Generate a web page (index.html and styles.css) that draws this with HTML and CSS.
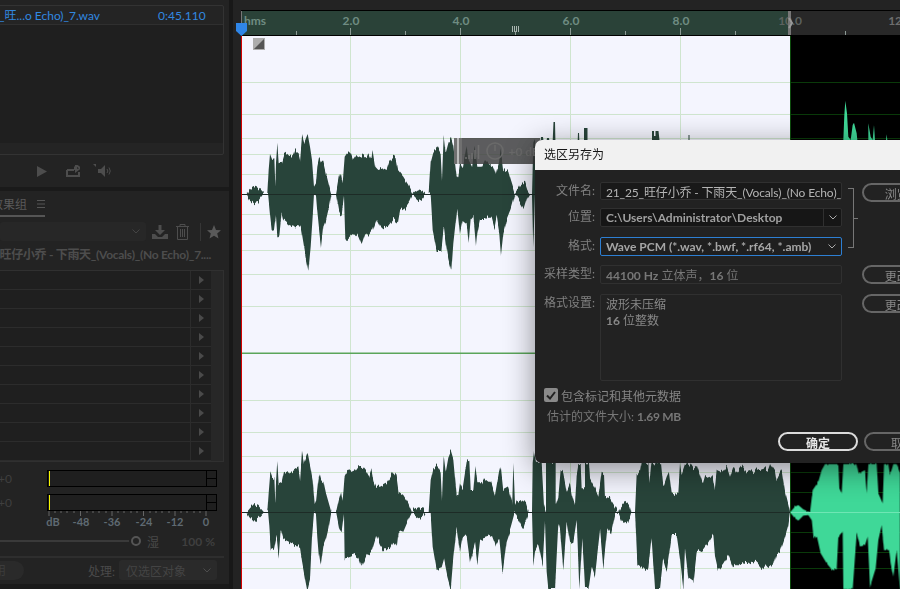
FILE: index.html
```html
<!DOCTYPE html>
<html lang="zh-CN">
<head>
    <meta charset="UTF-8">
    <title>选区另存为</title>
    <link rel="stylesheet" href="styles.css">
</head>
<body>
<div class="app">
    <div class="left-col">
        <div class="files-panel">
            <div class="file-box">
                <div class="file-row">
                    <span class="file-name">25_旺...o Echo)_7.wav</span>
                    <span class="file-time">0:45.110</span>
                </div>
                <div class="file-list"></div>
            </div>
            <div class="transport">
                <svg width="10" height="11" viewBox="0 0 10 11"><polygon points="0,0 10,5.500 0,11" fill="#4d4d4d"/></svg>
                <svg width="14" height="12" viewBox="0 0 14 12"><path d="M1 5v6h12V7M1 5h7M8 2.500h2V0l4 3-4 3V4H8" fill="none" stroke="#4d4d4d" stroke-width="2"/></svg>
                <svg width="20" height="14" viewBox="0 0 20 14"><polygon points="0,0 3,0 3,3" fill="#4d4d4d"/><polygon points="5,5 8,5 12,1 12,13 8,9 5,9" fill="#4d4d4d"/><path d="M14 5a3 3 0 0 1 0 4M16 3.500a6 6 0 0 1 0 7" fill="none" stroke="#4d4d4d"/></svg>
            </div>
        </div>
        <div class="fx-panel">
            <div class="fx-tabs">
                <span class="fx-tab">效果组</span>
                <svg width="8" height="8" viewBox="0 0 8 8"><path d="M0 .5h8M0 4h8M0 7.500h8" stroke="#555"/></svg>
            </div>
            <div class="fx-tools">
                <div class="fx-select"><svg width="8" height="5" viewBox="0 0 8 5"><path d="M.5.5 4 4 7.500.5" fill="none" stroke="#444"/></svg></div>
                <svg class="tool-save" width="16" height="14" viewBox="0 0 16 14"><path d="M6.500 0h3v5H13L8 10 3 5h3.500zM0 9h3l3 3h4l3-3h3v5H0z" fill="#4d4d4d"/></svg>
                <svg class="tool-trash" width="13" height="16" viewBox="0 0 13 16"><path d="M0 2.500h13M4 2.500V.5h5v2M1.500 2.500v13h10v-13M4.500 5v8M6.500 5v8M8.500 5v8" fill="none" stroke="#4d4d4d"/></svg>
                <span class="tool-sep"></span>
                <svg class="tool-star" width="14" height="14" viewBox="0 0 14 14"><polygon points="7,0 9,5 14,5.300 10.200,8.500 11.500,13.500 7,10.700 2.500,13.500 3.800,8.500 0,5.300 5,5" fill="#595959"/></svg>
            </div>
            <div class="fx-preset"><span>旺仔小乔 - 下雨天_(Vocals)_(No Echo)_7....</span></div>
            <div class="rack">
                <div class="rack-row"><span class="rack-slot"></span><span class="rack-arrow"><i></i></span></div>
                <div class="rack-row"><span class="rack-slot"></span><span class="rack-arrow"><i></i></span></div>
                <div class="rack-row"><span class="rack-slot"></span><span class="rack-arrow"><i></i></span></div>
                <div class="rack-row"><span class="rack-slot"></span><span class="rack-arrow"><i></i></span></div>
                <div class="rack-row"><span class="rack-slot"></span><span class="rack-arrow"><i></i></span></div>
                <div class="rack-row"><span class="rack-slot"></span><span class="rack-arrow"><i></i></span></div>
                <div class="rack-row"><span class="rack-slot"></span><span class="rack-arrow"><i></i></span></div>
                <div class="rack-row"><span class="rack-slot"></span><span class="rack-arrow"><i></i></span></div>
                <div class="rack-row"><span class="rack-slot"></span><span class="rack-arrow"><i></i></span></div>
                <div class="rack-row"><span class="rack-slot"></span><span class="rack-arrow"><i></i></span></div>
            </div>
            <div class="meter-row">
                <span class="meter-val">+0</span>
                <div class="meter"><i class="meter-peak"></i><span class="meter-end"><i></i><i></i></span></div>
            </div>
            <div class="meter-row second">
                <span class="meter-val">+0</span>
                <div class="meter"><i class="meter-peak"></i><span class="meter-end"><i></i><i></i></span></div>
            </div>
            <svg class="meter-scale" width="229" height="18" viewBox="0 511 229 18">
                <path d="M49 511v5M80.500 511v5M112 511v5M143.500 511v5M175 511v5M206 511v5M55 511v2M61 511v2M67 511v2M74 511v2M87 511v2M93 511v2M99 511v2M106 511v2M118 511v2M124 511v2M131 511v2M137 511v2M150 511v2M156 511v2M162 511v2M169 511v2M181 511v2M187 511v2M194 511v2M200 511v2" stroke="#666" fill="none"/>
                <g font-size="11" font-weight="700" fill="#5f6a72" text-anchor="middle">
                    <text x="53" y="526">dB</text><text x="81" y="526">-48</text><text x="112" y="526">-36</text><text x="144" y="526">-24</text><text x="175" y="526">-12</text><text x="206" y="526">0</text>
                </g>
            </svg>
            <div class="mix-row">
                <span class="mix-line"></span>
                <span class="mix-knob"></span>
                <span class="mix-label">湿</span>
                <span class="mix-val">100 %</span>
            </div>
            <div class="fx-foot">
                <span class="fx-pill">启用</span>
                <span class="fx-process">处理:</span>
                <div class="fx-scope">仅选区对象<svg width="8" height="5" viewBox="0 0 8 5"><path d="M.5.5 4 4 7.500.5" fill="none" stroke="#4d4d4d"/></svg></div>
            </div>
        </div>
    </div>

    <div class="editor">
        <div class="top-strip"></div>
        <svg class="ruler" width="659" height="25" viewBox="241 11 659 25">
            <rect x="241" y="11" width="549" height="24" fill="#2a4238"/>
            <rect x="790" y="11" width="110" height="24" fill="#282828"/>
            <rect x="241" y="35" width="659" height="1" fill="#000"/>
            <rect x="241" y="11" width="1" height="12" fill="#777"/>
            <path d="M296.500 31v4M350.500 28v7M405.500 31v4M460.500 28v7M515.500 31v4M570.500 28v7M625.500 31v4M680.500 28v7M735.500 31v4M845.500 31v4" stroke="#8c9a95"/>
            <path d="M512.500 26v6M514.500 26v6M516.500 26v6M518.500 26v6" stroke="#a9b5b0"/>
            <g font-size="12" font-weight="700" fill="#6f8c82" text-anchor="middle">
                <text x="255" y="24.500">hms</text>
                <text x="351" y="24.500">2.0</text>
                <text x="461" y="24.500">4.0</text>
                <text x="571" y="24.500">6.0</text>
                <text x="681" y="24.500">8.0</text>
            </g>
            <text x="790" y="24.500" font-size="12" font-weight="700" fill="#5c625f" text-anchor="middle">10.0</text>
            <text x="900" y="24.500" font-size="12" font-weight="700" fill="#6d6d6d" text-anchor="middle">12.0</text>
            <rect x="788" y="11" width="3" height="24" fill="#777"/>
            <path d="M789 18l3 5-3 5" fill="none" stroke="#999" stroke-width="2"/>
            <polygon points="236,23 247,23 247,31 241.500,36 236,31" fill="#2f86e8"/>
        </svg>
        <svg class="waves" width="659" height="553" viewBox="241 36 659 553">
            <defs>
                <filter id="rough" filterUnits="userSpaceOnUse" x="241" y="36" width="659" height="553" color-interpolation-filters="sRGB">
                    <feTurbulence type="fractalNoise" baseFrequency="0.45 0.006" numOctaves="2" seed="7" result="noise"/>
                    <feColorMatrix in="noise" type="matrix" values="1 0 0 0 0  0 0 0 0 .5  0 0 0 0 0  0 0 0 0 1" result="map"/>
                    <feDisplacementMap in="SourceGraphic" in2="map" scale="10" xChannelSelector="G" yChannelSelector="R"/>
                </filter>
            </defs>
            <rect x="241" y="36" width="549" height="553" fill="#f4f5fe"/>
            <rect x="791" y="36" width="109" height="553" fill="#000"/>
            <path d="M350.500 36v553M460.500 36v553M570.500 36v553M680.500 36v553" stroke="#cfe5cf"/>
            <path d="M242 82.500h548M242 114.500h548M242 138.500h548M242 154.500h548M242 174.500h548M242 214.500h548M242 234.500h548M242 250.500h548M242 274.500h548M242 306.500h548M242 400.500h548M242 432.500h548M242 456.500h548M242 472.500h548M242 492.500h548M242 532.500h548M242 552.500h548M242 568.500h548" stroke="#cfe5cf"/>
            <path d="M791 82.500h109M791 114.500h109M791 138.500h109M791 154.500h109M791 174.500h109M791 214.500h109M791 234.500h109M791 250.500h109M791 274.500h109M791 306.500h109M791 400.500h109M791 432.500h109M791 456.500h109M791 472.500h109M791 492.500h109M791 532.500h109M791 552.500h109M791 568.500h109" stroke="#0a3a0a"/>
            <rect x="242" y="352.500" width="293" height="1.500" fill="#5aa55a"/>
            <rect x="241" y="36" width="1" height="553" fill="#d40000"/>
            <rect x="790" y="36" width="1" height="553" fill="#0c4a0c"/>

            <g fill="#28443a" filter="url(#rough)">
                <!-- top channel -->
                <g transform="translate(240 120) scale(.33333)">
                    <polygon points="20,222 28,208 40,198 55,204 72,222 82,222 86,150 90,102 97,120 103,118 106,200 108,125 112,68 116,130 126,125 132,105 140,100 148,108 160,105 165,90 175,100 180,120 186,48 192,70 203,42 210,80 216,120 222,200 228,190 232,140 238,110 244,125 250,125 258,160 268,200 274,222 288,222 296,175 302,155 308,190 314,110 322,98 332,97 340,120 350,105 362,112 370,105 380,115 386,100 394,118 398,90 406,140 415,150 430,145 440,150 448,125 458,112 466,108 474,150 490,170 505,195 518,222 524,215 535,208 548,212 556,222 566,222 572,125 580,95 592,82 602,100 606,180 611,45 617,100 625,70 632,50 640,80 650,170 655,165 660,130 668,145 680,75 686,120 696,140 704,80 712,140 725,140 735,120 750,135 760,140 768,165 777,130 782,85 790,150 805,155 812,180 825,222 833,210 842,192 855,188 862,210 870,222 876,222 880,70 885,60 885,222 880,382 876,222 870,222 862,235 852,268 845,255 833,235 825,222 812,270 800,300 790,340 783,405 778,340 770,290 764,325 755,290 745,290 735,300 720,300 712,340 708,382 700,290 692,300 686,372 680,310 668,300 660,340 652,260 640,370 634,455 625,420 617,370 611,320 604,390 590,390 578,330 572,225 566,222 556,222 548,235 535,240 524,230 518,222 508,245 495,265 480,275 474,310 460,300 445,320 430,325 420,315 410,295 396,335 385,350 375,345 365,375 355,350 345,340 332,350 316,365 312,230 305,285 298,280 288,222 274,222 265,270 258,300 250,320 243,385 238,340 232,280 228,230 222,222 218,290 212,380 205,455 198,420 190,370 182,320 170,318 160,320 148,315 130,300 125,280 118,350 112,345 108,285 102,335 95,330 90,285 84,222 72,222 55,245 42,250 28,238 20,222"/>
                </g>
                <!-- bottom channel -->
                <g transform="translate(240 440) scale(.33333)">
                    <polygon points="20,217 30,205 42,192 55,197 72,217 82,217 86,160 91,97 97,115 103,112 106,190 108,125 112,60 116,130 125,125 132,92 145,98 160,92 175,82 180,120 186,35 192,70 203,38 212,85 218,120 224,195 228,185 234,130 238,100 244,122 250,122 258,160 268,195 274,217 288,217 296,180 303,155 308,185 314,105 322,90 332,88 345,95 355,82 368,80 380,95 386,108 394,85 400,120 408,140 420,140 440,130 450,115 460,97 470,110 476,155 490,165 505,190 516,217 522,210 535,202 548,205 556,217 566,217 572,120 580,85 592,75 602,95 606,180 611,45 617,95 625,50 632,33 640,60 650,170 655,165 660,128 668,145 680,65 688,62 692,150 700,150 706,78 712,130 725,130 732,115 745,125 752,125 765,165 777,95 782,75 790,150 805,142 812,170 825,217 833,195 850,180 858,190 866,217 860,235 850,265 840,245 833,235 825,217 812,265 800,300 788,400 778,300 768,320 755,285 745,290 730,295 720,300 712,370 705,310 690,365 680,290 668,290 660,335 650,260 640,350 632,447 622,410 612,360 605,385 590,390 578,320 572,217 566,217 556,217 548,230 535,235 522,225 516,217 505,240 490,275 476,270 470,320 460,305 450,325 430,325 420,310 410,285 395,335 380,345 365,380 355,350 345,345 320,355 314,355 312,225 305,280 298,270 288,217 274,217 265,270 258,300 250,320 242,380 236,340 232,290 228,225 222,217 216,290 210,415 202,447 195,410 186,360 180,320 165,318 150,310 130,300 122,270 116,350 110,290 102,330 92,325 88,260 84,217 72,217 55,235 42,245 28,232 20,217"/>
                </g>
                <g transform="translate(520 455) scale(.33333)">
                    <polygon points="-24,172 -20,20 -15,150 -8,135 5,140 15,150 24,172 36,172 38,30 42,-10 48,20 65,20 72,150 78,172 78,20 107,20 107,150 115,125 122,45 130,55 140,110 150,85 155,115 165,150 170,60 175,30 182,30 185,100 195,100 195,25 207,25 210,70 225,100 235,125 245,50 252,55 255,125 270,130 285,155 295,172 303,155 315,140 328,150 334,172 345,172 350,60 360,50 365,20 385,20 388,90 394,25 423,25 430,95 440,65 447,50 455,115 465,120 475,110 480,30 485,60 495,30 510,25 520,40 530,30 540,60 548,85 555,60 570,70 578,60 585,100 590,50 600,45 610,50 620,35 630,65 640,35 650,55 665,35 675,50 690,45 700,55 710,40 720,45 735,40 745,45 752,25 765,45 770,75 785,45 795,110 805,150 810,172 805,210 795,245 780,290 770,295 760,330 745,342 735,330 725,342 710,325 695,320 680,325 660,320 640,340 625,300 610,325 595,345 585,300 580,240 565,265 550,285 530,295 520,380 505,370 495,280 490,400 480,310 470,240 455,240 440,345 430,310 420,402 405,402 395,250 385,340 375,345 360,330 352,325 345,172 334,172 325,200 316,208 305,198 295,172 285,178 272,238 262,220 250,340 240,225 225,360 215,330 205,402 195,402 187,250 178,402 170,195 160,260 150,265 140,200 130,340 120,220 115,200 105,402 85,402 80,350 75,200 68,330 55,270 45,290 40,330 36,172 24,172 12,205 8,222 0,205 -15,172 -24,172"/>
                </g>
            </g>
            <path d="M552.500 145l1-23 1.500 0 .5 23zM577.500 145l.5-12h1l.5 12zM584 145v-17h3.500v17zM652 145v-14h2v5h1.500v-5h3l1.500 14zM688.500 145v-10h1v10zM540 145l1-8 2 0 1 8zM546 145l1-7 2 0 1 7z" fill="#28443a"/>

            <g fill="#3fd898">
                <g transform="translate(700 0) scale(.33333)">
                    <polygon points="430,420 433,345 436,302 441,340 445,410 452,420 458,375 462,368 470,400 472,420 505,420 505,370 512,410 518,420 522,375 525,420 558,420 560,403 562,420"/>
                </g>
                <g transform="translate(700 450) scale(.33333)" filter="url(#rough)">
                    <polygon points="270,187 285,170 295,165 310,178 330,187 338,120 345,110 355,95 365,60 375,42 415,42 418,115 425,130 430,42 470,42 475,70 495,60 500,130 505,42 530,42 535,130 548,160 552,42 565,42 570,75 580,42 590,42 600,70 600,420 590,300 580,380 572,340 567,300 552,300 545,225 535,270 527,355 510,410 503,260 495,285 480,290 470,250 458,417 430,417 428,245 415,260 410,358 395,358 380,340 362,310 352,265 340,260 335,210 325,195 310,197 295,212 285,205 270,187"/>
                </g>
            </g>

            <path d="M242 194.500h548M242 512.500h548" stroke="#1d2b26"/>
            <path d="M791 512.500h109" stroke="#6fe6b4"/>
            <path d="M791 194.500h109" stroke="#0a3a0a"/>

            <rect x="253" y="38" width="12" height="12" fill="#adadad"/>
            <polygon points="264,39 264,49 254,49" fill="#555"/>
        </svg>
    </div>

    <div class="hud">
        <span class="hud-grip"></span>
        <svg width="15" height="15" viewBox="0 0 15 15"><path d="M1 15v-2M4 15v-4M7 15v-6M10 15v-9M13.500 15V1" stroke="#6e6e6e" stroke-width="1.500"/></svg>
        <svg class="hud-knob" width="18" height="18" viewBox="0 0 18 18"><circle cx="9" cy="9" r="8" fill="none" stroke="#6a6a6a" stroke-width="1.500"/><path d="M9 3v6" stroke="#6a6a6a" stroke-width="1.500"/></svg>
        <span class="hud-val">+0 dB</span>
    </div>

    <div class="dialog">
        <div class="dialog-title">选区另存为</div>
        <div class="dialog-grid">
            <label class="field-label">文件名:</label>
            <div class="field file-field">21_25_旺仔小乔 - 下雨天_(Vocals)_(No Echo)_</div>
            <span class="bracket"></span>
            <button class="btn">浏览...</button>

            <label class="field-label">位置:</label>
            <div class="field dark-field">C:\Users\Administrator\Desktop<span class="field-drop"><svg width="8" height="5" viewBox="0 0 8 5"><path d="M.5.5 4 4 7.500.5" fill="none" stroke="#aaa"/></svg></span></div>
            <span></span>

            <label class="field-label">格式:</label>
            <div class="field focus-field">Wave PCM (*.wav, *.bwf, *.rf64, *.amb)<span class="field-drop"><svg width="8" height="5" viewBox="0 0 8 5"><path d="M.5.5 4 4 7.500.5" fill="none" stroke="#aaa"/></svg></span></div>
            <span></span>

            <label class="field-label">采样类型:</label>
            <div class="field off-field"><span><b>44100 Hz</b> 立体声，<b>16</b> 位</span></div>
            <button class="btn">更改...</button>

            <label class="field-label">格式设置:</label>
            <div class="field area-field"><div>波形未压缩</div><div><b>16</b> 位整数</div></div>
            <button class="btn">更改...</button>
        </div>
        <div class="dialog-check">
            <span class="check-box"><svg width="10" height="9" viewBox="0 0 10 9"><path d="M1 4.500 4 7.500 9 1" fill="none" stroke="#222" stroke-width="2"/></svg></span>
            包含标记和其他元数据
        </div>
        <div class="dialog-size">估计的文件大小: <b>1.69 MB</b></div>
        <div class="dialog-actions">
            <button class="btn btn-ok">确定</button>
            <button class="btn">取消</button>
        </div>
    </div>
</div>
</body>
</html>
```

FILE: styles.css
```css
*{
    margin: 0;
    padding: 0;
    box-sizing: border-box;
}
body{
    width: 900px;
    height: 589px;
    overflow: hidden;
    background: #232323;
    font-family: "Lato", "Noto Sans CJK SC", sans-serif;
    font-size: 12px;
}
svg{
    display: block;
    flex: none;
}
.app{
    position: relative;
    display: flex;
    width: 900px;
    height: 589px;
    overflow: hidden;
}

/* left column */
.left-col{
    width: 233px;
    height: 589px;
    flex: none;
    display: flex;
    flex-direction: column;
    border-right: 4px solid #181818;
    background: #1a1a1a;
}
.files-panel{
    height: 187px;
    padding-top: 5px;
    background: #232323;
}
.file-box{
    width: 228px;
    height: 150px;
    margin-left: -4px;
    border: 1px solid #333;
    border-radius: 2px;
    background: #242424;
}
.file-row{
    display: flex;
    height: 19px;
    line-height: 19px;
    border-bottom: 1px solid #2f2f2f;
    color: #3188e0;
    white-space: nowrap;
}
.file-name{
    display: flex;
    justify-content: flex-end;
    width: 103px;
    margin-right: 58px;
}
.file-list{
    height: 118px;
    background: #1f1f1f;
}
.transport{
    display: flex;
    align-items: center;
    gap: 19px;
    margin-top: 9px;
    padding-left: 37px;
}
.transport svg:last-child{
    margin-left: -6px;
}
.fx-panel{
    height: 393px;
    margin-top: 4px;
    background: #232323;
    color: #4d4d4d;
}
.fx-tabs{
    display: flex;
    align-items: center;
    gap: 10px;
    height: 26px;
    background: linear-gradient(#555, #555) 0 24px / 45px 2px no-repeat;
}
.fx-tab{
    height: 26px;
    width: 36px;
    margin-left: -9px;
    line-height: 27px;
    color: #5a5a5a;
    white-space: nowrap;
}
.fx-tools{
    display: flex;
    align-items: center;
    height: 19px;
    margin-top: 5px;
}
.fx-select{
    display: flex;
    align-items: center;
    justify-content: flex-end;
    width: 146px;
    height: 19px;
    padding-right: 6px;
    border-radius: 3px;
    background: #272727;
}
.tool-save{
    margin-left: 6px;
}
.tool-trash{
    margin-left: 8px;
}
.tool-sep{
    width: 1px;
    height: 18px;
    margin-left: 11px;
    background: #363636;
}
.tool-star{
    margin-left: 6px;
}
.fx-preset{
    display: flex;
    justify-content: flex-end;
    width: 211px;
    height: 16px;
    margin-top: 6px;
    line-height: 16px;
    font-weight: 700;
    letter-spacing: -.3px;
    white-space: nowrap;
}
.rack{
    width: 226px;
    height: 192px;
    margin: 7px 0 0 -2px;
    padding-right: 12px;
    border: 1px solid #303030;
    background: #272727;
}
.rack-row{
    display: flex;
    height: 19px;
    border-bottom: 1px solid #2c2c2c;
    background: #1f1f1f;
}
.rack-slot{
    flex: 1;
}
.rack-arrow{
    display: flex;
    align-items: center;
    justify-content: center;
    width: 21px;
    border-left: 1px solid #2c2c2c;
}
.rack-arrow i{
    border-left: 5px solid #4a4a4a;
    border-top: 4px solid transparent;
    border-bottom: 4px solid transparent;
}
.meter-row{
    display: flex;
    align-items: center;
    margin-top: 8px;
}
.meter-row.second{
    margin-top: 7px;
}
.meter-val{
    width: 47px;
    margin-left: -2px;
    color: #3f3f3f;
}
.meter-val + .meter{
    margin-left: 2px;
}
.meter{
    display: flex;
    justify-content: space-between;
    width: 170px;
    height: 17px;
    border: 1px solid #000;
    background: #1f1f1f;
}
.meter-peak{
    width: 1px;
    margin-left: 1px;
    background: #f5f500;
}
.meter-end{
    display: flex;
    flex-direction: column;
    width: 10px;
    border-left: 1px solid #000;
}
.meter-end i{
    flex: 1;
}
.meter-end i:first-child{
    border-bottom: 1px solid #000;
}
.mix-row{
    display: flex;
    align-items: center;
    width: 215px;
    height: 12px;
    margin-top: 6px;
}
.mix-line{
    width: 129px;
    height: 2px;
    background: #3a3a3a;
}
.mix-knob{
    width: 10px;
    height: 10px;
    margin-left: 2px;
    border: 2px solid #555;
    border-radius: 50%;
}
.mix-label{
    margin-left: 6px;
    color: #4a4a4a;
}
.mix-val{
    margin-left: auto;
    font-weight: 700;
    color: #3f3f3f;
}
.fx-foot{
    display: flex;
    align-items: center;
    width: 224px;
    height: 23px;
    margin-top: 9px;
    padding-top: 3px;
    border-top: 2px solid #2e2e2e;
}
.fx-pill{
    width: 54px;
    height: 19px;
    margin-left: -30px;
    padding-left: 12px;
    line-height: 19px;
    border-radius: 10px;
    background: #2a2a2a;
    color: #3c3c3c;
}
.fx-process{
    width: 31px;
    margin-left: 64px;
    color: #4a4a4a;
}
.fx-scope{
    display: flex;
    align-items: center;
    justify-content: space-between;
    width: 98px;
    height: 20px;
    padding: 0 6px 0 7px;
    border-radius: 3px;
    background: #2a2a2a;
    color: #444;
}

/* editor */
.editor{
    width: 659px;
    height: 589px;
    flex: none;
    margin-left: 8px;
}
.top-strip{
    height: 11px;
    border-bottom: 1px solid #000;
}
.ruler{
    overflow: visible;
}

/* floating volume hud */
.hud{
    position: absolute;
    left: 454px;
    top: 138px;
    display: flex;
    align-items: center;
    width: 86px;
    height: 26px;
    background: rgba(58, 58, 58, .82);
    color: #6a6a6a;
    font-weight: 700;
    font-size: 12px;
}
.hud-grip{
    width: 8px;
    height: 26px;
    margin-right: 3px;
    background: radial-gradient(#bbb 40%, transparent 45%) 2px 0 / 4px 2px repeat-y, #707070;
}
.hud-knob{
    margin-left: 6px;
}
.hud-val{
    margin-left: 5px;
    white-space: nowrap;
}

/* save selection dialog */
.dialog{
    position: absolute;
    left: 535px;
    top: 140px;
    width: 420px;
    height: 323px;
    border-radius: 7px;
    background: #222;
    box-shadow: 0 6px 30px rgba(0, 0, 0, .45);
    color: #808080;
    font-size: 12px;
    overflow: hidden;
}
.dialog-title{
    height: 30px;
    padding-left: 9px;
    line-height: 29px;
    background: #f1f1f1;
    color: #151515;
}
.dialog-grid{
    display: grid;
    grid-template-columns: 60px 247px 20px 78px;
    grid-template-rows: 26px 29px 28px 29px 86px;
    margin-top: 12px;
}
.field-label{
    height: 18px;
    line-height: 18px;
    text-align: right;
    white-space: nowrap;
    color: #808080;
}
.field{
    display: flex;
    align-items: center;
    justify-content: space-between;
    width: 242px;
    height: 19px;
    margin-left: 5px;
    padding-left: 5px;
    border: 1px solid #303030;
    border-radius: 2px;
    white-space: nowrap;
    overflow: hidden;
}
.file-field{
    height: 18px;
    background: #191919;
    color: #b4b4b4;
    letter-spacing: -.15px;
}
.dark-field{
    background: #161616;
    color: #a0a0a0;
    font-weight: 700;
}
.focus-field{
    border-color: #2d7fd3;
    background: #1f1f1f;
    color: #a6a6a6;
    font-weight: 700;
}
.off-field{
    color: #777;
}
.area-field{
    display: block;
    height: 87px;
    padding-top: 2px;
    line-height: 16px;
    color: #888;
}
.field-drop{
    display: flex;
    align-items: center;
    justify-content: center;
    width: 18px;
    height: 100%;
    flex: none;
}
.dark-field .field-drop{
    border-left: 1px solid #303030;
}
.bracket{
    position: relative;
    width: 6px;
    height: 60px;
    margin: 6px 0 0 6px;
    grid-row: 1 / 4;
    grid-column: 3;
    border: solid #777;
    border-width: 1px 1px 1px 0;
}
.bracket::after{
    content: "";
    position: absolute;
    right: -5px;
    top: 29px;
    width: 5px;
    height: 1px;
    background: #777;
}
.btn{
    width: 78px;
    height: 19px;
    grid-column: 4;
    border: 2px solid #666;
    border-radius: 10px;
    background: transparent;
    font: inherit;
    color: #8a8a8a;
}
.dialog-grid .btn:first-of-type{
    margin-top: 1px;
}
.dialog-check{
    display: flex;
    align-items: center;
    gap: 3px;
    margin: 8px 0 0 9px;
    height: 14px;
    color: #868686;
}
.check-box{
    display: flex;
    align-items: center;
    justify-content: center;
    width: 14px;
    height: 14px;
    border-radius: 2px;
    background: #8a8a8a;
}
.dialog-size{
    margin: 6px 0 0 12px;
    line-height: 18px;
    color: #777;
}
.dialog-size b{
    letter-spacing: -.3px;
}
.dialog-actions{
    display: flex;
    gap: 6px;
    margin: 6px 0 0 243px;
}
.btn-ok{
    width: 80px;
    border: 2px solid #dcdcdc;
    color: #e6e6e6;
    font-weight: 700;
}
```
